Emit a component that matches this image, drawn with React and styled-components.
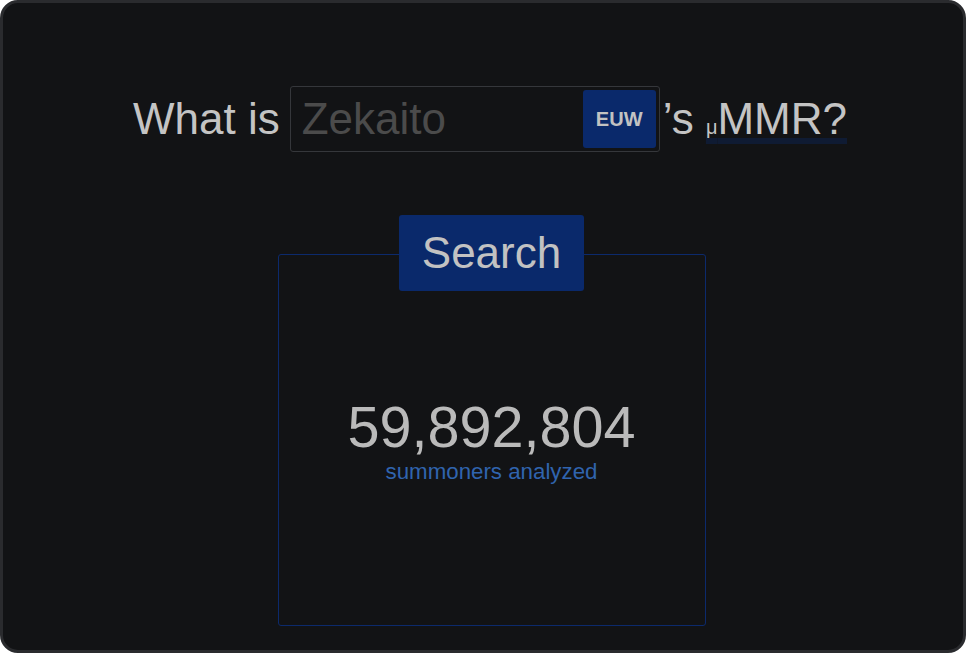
import React from "react";
import styled, { createGlobalStyle } from "styled-components";

const Global = createGlobalStyle`
  html, body { margin: 0; padding: 0; background: #ffffff; }
  body { font-family: "Liberation Sans", Arial, sans-serif; }
  * { box-sizing: border-box; }
`;

const Frame = styled.div`
  width: 966px;
  height: 653px;
  border: 3px solid #2a2b2e;
  border-radius: 18px;
  background: #121315;
  overflow: hidden;
`;

const Content = styled.main`
  display: flex;
  flex-direction: column;
  align-items: center;
  padding: 83px 0 0 17px;
  color: #c4c4c4;
  font-family: "Liberation Sans", Arial, sans-serif;
`;

const Heading = styled.div`
  display: flex;
  align-items: center;
  height: 66px;
  margin-right: 3px;
  font-size: 44px;
  line-height: 1.15;
  white-space: nowrap;
`;

const Label = styled.span`
  margin-right: ${(p) => p.$gap || 0}px;
`;

const InputBox = styled.div`
  display: flex;
  align-items: stretch;
  width: 370px;
  height: 66px;
  padding: 3px 3px 3px 11px;
  border: 1px solid #35373b;
  border-radius: 3px;
  margin-right: 3px;
`;

const NameInput = styled.input`
  flex: 1;
  min-width: 0;
  border: none;
  outline: none;
  background: transparent;
  padding: 0;
  font-family: "Liberation Sans", Arial, sans-serif;
  font-size: 44px;
  color: #c4c4c4;
  &::placeholder { color: #4b4b4b; }
`;

const Region = styled.button`
  width: 73px;
  border: none;
  border-radius: 3px;
  background: #0a296b;
  color: #c2c2c2;
  font-family: "Liberation Sans", Arial, sans-serif;
  font-weight: bold;
  font-size: 20px;
  padding: 0;
`;

const Underlined = styled.span`
  text-decoration: underline;
  text-decoration-color: #0f1b33;
  text-decoration-thickness: 6px;
  text-underline-offset: 4px;
`;

const Mu = styled.small`
  font-size: 20px;
`;

const SearchArea = styled.section`
  display: flex;
  flex-direction: column;
  align-items: center;
  margin-top: 63px;
`;

const SearchButton = styled.button`
  position: relative;
  z-index: 1;
  height: 76px;
  padding: 0 23px;
  border: none;
  border-radius: 3px;
  background: #0a296b;
  color: #c2c2c2;
  font-family: "Liberation Sans", Arial, sans-serif;
  font-size: 44px;
  line-height: 76px;
`;

const StatsBox = styled.div`
  width: 428px;
  height: 372px;
  margin-top: -37px;
  border: 1px solid #0c2a6c;
  border-radius: 3px;
  display: flex;
  flex-direction: column;
  align-items: center;
  justify-content: center;
`;

const Count = styled.div`
  font-size: 57.6px;
  line-height: 1.1;
  color: #bababa;
`;

const Caption = styled.div`
  font-size: 22.3px;
  line-height: 1.15;
  color: #3064ae;
`;

export default function App() {
  return (
    <>
      <Global />
      <Frame>
        <Content>
          <Heading>
            <Label $gap={10}>What is</Label>
            <InputBox>
              <NameInput placeholder="Zekaito" />
              <Region>EUW</Region>
            </InputBox>
            <Label>
              ’s <Underlined><Mu>μ</Mu>MMR?</Underlined>
            </Label>
          </Heading>
          <SearchArea>
            <SearchButton>Search</SearchButton>
            <StatsBox>
              <Count>59,892,804</Count>
              <Caption>summoners analyzed</Caption>
            </StatsBox>
          </SearchArea>
        </Content>
      </Frame>
    </>
  );
}
